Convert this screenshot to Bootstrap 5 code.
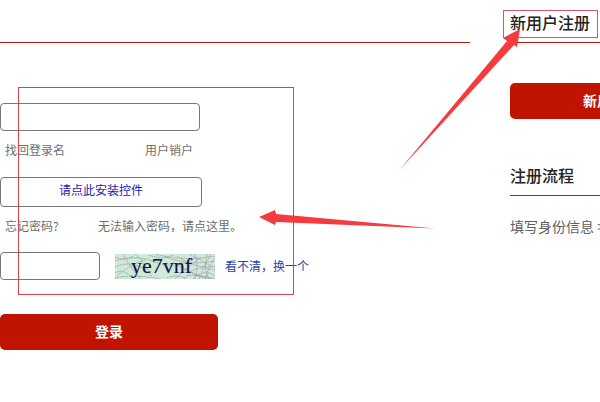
<!DOCTYPE html>
<html lang="zh">
<head>
<meta charset="utf-8">
<title>登录</title>
<link rel="stylesheet" href="https://cdn.jsdelivr.net/npm/bootstrap@5.3.0/dist/css/bootstrap.min.css">
<style>
html,body{width:600px;height:402px;overflow:hidden;background:#fff}
body{font-family:"Noto Sans CJK SC","Liberation Sans",sans-serif;font-size:12px;color:#666;position:relative}
.page-wrap{width:768px}
.left-col{width:470px;margin-right:40px}
.right-col{width:218px}
.head-band{height:43px;border-bottom:1px solid #b81c0a}
.side-title{height:43px;border-bottom:1px solid #b81c0a;font-size:16px;font-weight:500;color:#222;line-height:24px;padding-top:10px}
.user-box{width:200px;height:28px;margin-top:60px;border:1px solid #777;border-radius:4px}
.link-row{height:14px;line-height:14px;margin-top:12px;padding-left:5px}
.gray-a{color:#6e6e6e;text-decoration:none}
.find-a{width:140px}
.ctrl-box{width:202px;height:30px;margin-top:20px;border:1px solid #777;border-radius:4px;color:#1a1ab8;line-height:24px;text-align:center}
.pass-row{margin-top:12px;padding-left:5px;height:14px;line-height:14px}
.forgot-a{width:93px}
.code-row{margin-top:19px;height:28px}
.code-box{width:100px;height:28px;border:1px solid #777;border-radius:4px;margin-right:15px}
.code-pic{width:100px;height:25px;margin-right:10px;display:block}
.code-txt{font-family:"Liberation Serif",serif;font-size:22px;fill:#14144a;stroke:#14144a;stroke-width:.15px}
.blue-a{color:#2a45a0;text-decoration:none}
.red-btn{background:#c01400;color:#fff;border:0;border-radius:5px;height:36px;width:218px;font-size:14px;font-weight:700;padding:0 0 2px}
.login-btn{margin-top:34px}
.reg-btn{margin-top:40px;padding-right:2px}
.flow-title{margin-top:45px;height:32px;border-bottom:1px solid #b81c0a;font-size:16px;font-weight:500;color:#222;line-height:22px}
.flow-text{margin-top:20px;font-size:14px;line-height:20px;color:#606060;white-space:nowrap}
.mark-over{position:absolute;left:0;top:0;width:600px;height:402px;pointer-events:none}
</style>
</head>
<body>
<div class="page-wrap d-flex">
  <div class="left-col">
    <div class="head-band"></div>
    <div class="user-box"></div>
    <div class="link-row d-flex"><a class="gray-a find-a" href="#">找回登录名</a><a class="gray-a" href="#">用户销户</a></div>
    <div class="ctrl-box">请点此安装控件</div>
    <div class="pass-row d-flex"><a class="gray-a forgot-a" href="#">忘记密码?</a><a class="gray-a" href="#">无法输入密码，请点这里。</a></div>
    <div class="code-row d-flex align-items-center">
      <div class="code-box"></div>
      <svg class="code-pic" viewBox="0 0 100 25">
        <rect width="100" height="25" fill="#cdebd6"/>
        <g fill="none" stroke="#a79cae" stroke-width="1" stroke-dasharray="1.6 .8">
          <path d="M0 7Q20 0 40 8T80 4"/><path d="M0 13Q14 6 32 16"/><path d="M2 22Q16 10 30 6"/>
          <path d="M40 0Q70 8 100 2"/><path d="M50 3Q75 12 100 7"/><path d="M62 2Q82 16 100 12"/>
          <path d="M70 25Q80 8 100 17"/><path d="M78 25Q88 14 100 22"/><path d="M0 19Q8 14 18 24"/>
          <path d="M60 25Q72 14 86 3"/><path d="M84 25Q90 10 96 0"/><path d="M90 25Q94 12 100 4"/>
          <path d="M8 0Q14 12 26 25"/><path d="M20 0Q30 8 36 22"/><path d="M66 12Q80 22 98 25"/>
          <path d="M74 0Q86 6 100 15"/><path d="M72 22Q84 20 100 25"/><path d="M58 8Q76 20 92 25"/>
          <path d="M80 0Q84 12 80 25"/><path d="M92 0Q88 14 94 25"/><path d="M0 3Q10 8 18 2"/>
          <path d="M0 24Q20 20 46 25"/><path d="M34 1Q46 6 58 1"/><path d="M52 24Q60 20 70 24"/>
        </g>
        <text class="code-txt" x="16" y="19">ye7vnf</text>
      </svg>
      <a class="blue-a" href="#">看不清，换一个</a>
    </div>
    <button class="red-btn login-btn d-block" type="button">登录</button>
  </div>
  <div class="right-col">
    <div class="side-title">新用户注册</div>
    <button class="red-btn reg-btn d-block" type="button">新用户注册</button>
    <div class="flow-title">注册流程</div>
    <div class="flow-text">填写身份信息 &gt; 设置密码</div>
  </div>
</div>
<svg class="mark-over" viewBox="0 0 600 402">
  <g fill="none" stroke-width="1">
    <rect x="18.5" y="87.5" width="275" height="207" stroke="#d9424a"/>
    <rect x="503.5" y="10.5" width="94" height="27" stroke="#d4566a"/>
  </g>
  <g fill="#f43c3f">
    <polygon points="399.5,170 507,41 503,38 520,29 517,47 514,45"/>
    <polygon points="435,228.5 276,222 275,225 259,217 275,210 276,214"/>
  </g>
</svg>
</body>
</html>
